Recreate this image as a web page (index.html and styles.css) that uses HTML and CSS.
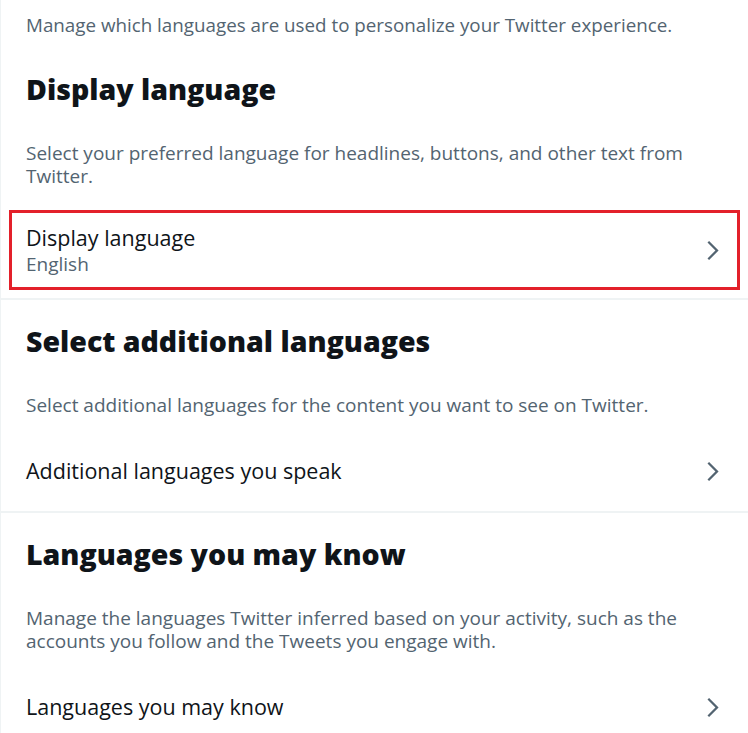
FILE: index.html
```html
<!DOCTYPE html>
<html lang="en">
<head>
    <meta charset="UTF-8">
    <meta name="viewport" content="width=device-width, initial-scale=1.0">
    <title>Languages</title>
    <link rel="stylesheet" href="styles.css">
</head>
<body>
    <div class="panel">
        <p class="intro">Manage which languages are used to personalize your Twitter experience.</p>

        <div class="section">
            <h2>Display language</h2>
            <p class="desc">Select your preferred language for headlines, buttons, and other text from Twitter.</p>
            <a class="row highlight" href="#">
                <div class="row-text">
                    <span class="row-title">Display language</span>
                    <span class="row-sub">English</span>
                </div>
                <svg class="chevron" viewBox="0 0 24 24"><path d="M14.586 12L7.543 4.96l1.414-1.42L17.414 12l-8.457 8.46-1.414-1.42L14.586 12z"></path></svg>
            </a>
        </div>

        <div class="section">
            <h2>Select additional languages</h2>
            <p class="desc">Select additional languages for the content you want to see on Twitter.</p>
            <a class="row" href="#">
                <div class="row-text">
                    <span class="row-title">Additional languages you speak</span>
                </div>
                <svg class="chevron" viewBox="0 0 24 24"><path d="M14.586 12L7.543 4.96l1.414-1.42L17.414 12l-8.457 8.46-1.414-1.42L14.586 12z"></path></svg>
            </a>
        </div>

        <div class="section">
            <h2>Languages you may know</h2>
            <p class="desc">Manage the languages Twitter inferred based on your activity, such as the accounts you follow and the Tweets you engage with.</p>
            <a class="row" href="#">
                <div class="row-text">
                    <span class="row-title">Languages you may know</span>
                </div>
                <svg class="chevron" viewBox="0 0 24 24"><path d="M14.586 12L7.543 4.96l1.414-1.42L17.414 12l-8.457 8.46-1.414-1.42L14.586 12z"></path></svg>
            </a>
        </div>
    </div>
</body>
</html>
```

FILE: styles.css
```css
body {
    margin: 0;
    background: #fff;
    font-family: "Open Sans", "Noto Sans", sans-serif;
    color: #0f1419;
}

.panel {
    border-left: 1px solid #eff3f4;
    min-height: 733px;
}

.intro {
    margin: 0;
    padding: 14px 25px 11px;
    font-size: 18.8px;
    line-height: 23px;
    color: #536471;
}

.section {
    border-bottom: 2px solid #eff3f4;
}

.section:last-child {
    border-bottom: none;
}

h2 {
    margin: 0;
    padding: 23px 25px 0;
    font-size: 28.5px;
    font-weight: 800;
    line-height: 36px;
}

.desc {
    margin: 0;
    padding: 35px 25px 14px;
    font-size: 19px;
    line-height: 23px;
    color: #536471;
}

.row {
    display: flex;
    align-items: center;
    justify-content: space-between;
    padding: 22px 22px 22px 25px;
    text-decoration: none;
    color: #0f1419;
}

.row.highlight {
    outline: 3px solid #e3202a;
    outline-offset: -11px;
}

.row-text {
    display: flex;
    flex-direction: column;
    justify-content: center;
    min-height: 36px;
}

.row-title {
    font-size: 21.5px;
    line-height: 28px;
}

.row-sub {
    font-size: 19px;
    line-height: 24px;
    color: #536471;
}

.chevron {
    width: 27px;
    height: 27px;
    fill: #536471;
}
```
